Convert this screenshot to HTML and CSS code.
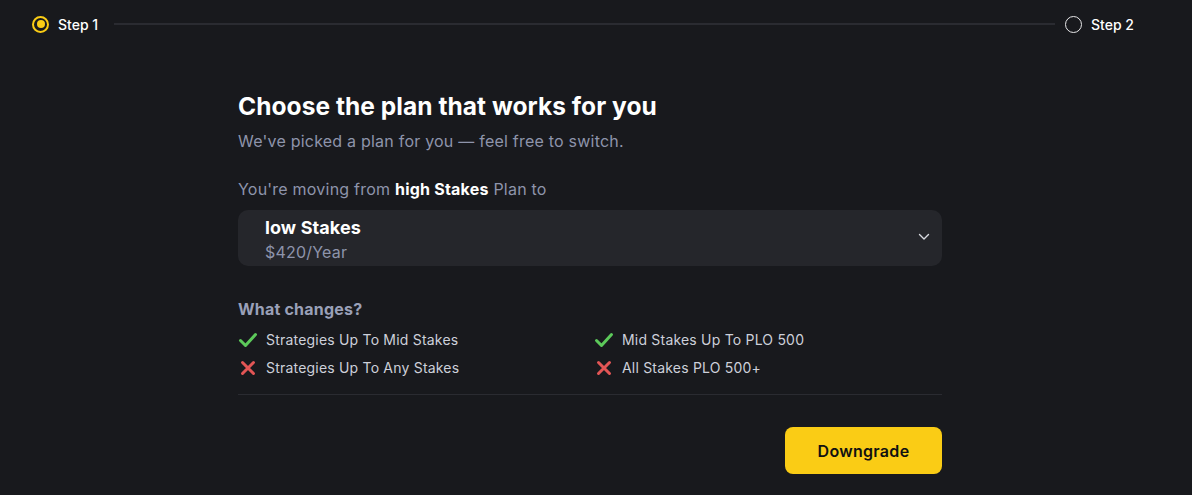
FILE: index.html
```html
<!DOCTYPE html>
<html>
<head>
<meta charset="utf-8">
<link rel="stylesheet" href="styles.css">
</head>
<body>
<div class="page">
  <div class="steps">
    <div class="step active"><span class="dot"></span><span class="label">Step 1</span></div>
    <div class="line"></div>
    <div class="step"><span class="dot"></span><span class="label">Step 2</span></div>
  </div>
  <main class="content">
    <h1 class="title">Choose the plan that works for you</h1>
    <p class="sub">We've picked a plan for you — feel free to switch.</p>
    <p class="moving">You're moving from <strong>high Stakes</strong> Plan to</p>
    <div class="select">
      <div class="sel-text">
        <div class="plan">low Stakes</div>
        <div class="price">$420/Year</div>
      </div>
      <svg class="chev" width="12" height="8" viewBox="0 0 12 8"><path d="M1.5 1.5 L6 6 L10.5 1.5" fill="none" stroke="#d8dae0" stroke-width="1.4" stroke-linecap="round" stroke-linejoin="round"/></svg>
    </div>
    <h2 class="changes">What changes?</h2>
    <div class="grid">
      <div class="item"><svg class="ic" viewBox="0 0 20 20"><path d="M2.5 10.5 L7.5 15.5 L17.5 4.5" fill="none" stroke="#5cc95a" stroke-width="3" stroke-linecap="round" stroke-linejoin="round"/></svg>Strategies Up To Mid Stakes</div>
      <div class="item"><svg class="ic" viewBox="0 0 20 20"><path d="M2.5 10.5 L7.5 15.5 L17.5 4.5" fill="none" stroke="#5cc95a" stroke-width="3" stroke-linecap="round" stroke-linejoin="round"/></svg>Mid Stakes Up To PLO 500</div>
      <div class="item"><svg class="ic" viewBox="0 0 20 20"><path d="M4.5 4.5 L15.5 15.5 M15.5 4.5 L4.5 15.5" fill="none" stroke="#e25555" stroke-width="3" stroke-linecap="round"/></svg>Strategies Up To Any Stakes</div>
      <div class="item"><svg class="ic" viewBox="0 0 20 20"><path d="M4.5 4.5 L15.5 15.5 M15.5 4.5 L4.5 15.5" fill="none" stroke="#e25555" stroke-width="3" stroke-linecap="round"/></svg>All Stakes PLO 500+</div>
    </div>
    <div class="divider"></div>
    <div class="actions"><button class="btn">Downgrade</button></div>
  </main>
</div>
</body>
</html>
```
FILE: styles.css
```css
* { box-sizing: border-box; }
html, body { margin: 0; padding: 0; background: #18191d; }
body { font-family: "Inter", "Open Sans", sans-serif; color: #fff; height: 495px; overflow: hidden; }
.page { padding: 14px 0 0 32px; }
.steps { display: flex; align-items: center; width: 1102px; height: 20px; }
.step { display: flex; align-items: center; gap: 9px; }
.dot { width: 17px; height: 17px; border-radius: 50%; border: 1.5px solid #e8e8ea; display: inline-block; position: relative; }
.step.active .dot { border: 2px solid #facc15; }
.step.active .dot::after { content: ""; position: absolute; left: 2.5px; top: 2.5px; width: 8px; height: 8px; border-radius: 50%; background: #facc15; }
.label { font-size: 14px; font-weight: 500; color: #fff; letter-spacing: 0; }
.line { flex: 1; height: 2px; background: #2a2b31; margin: 0 10px 0 16px; }
.content { width: 704px; margin-left: 206px; margin-top: 56px; }
.title { margin: 0; font-size: 24.5px; font-weight: 700; line-height: 32px; letter-spacing: 0.05px; }
.sub { margin: 8px 0 0; font-size: 16px; line-height: 22px; color: #8e94ab; letter-spacing: 0.22px; }
.moving { margin: 26px 0 0; font-size: 16px; line-height: 22px; color: #8e94ab; letter-spacing: 0.22px; }
.moving strong { color: #fff; font-weight: 700; }
.select { margin-top: 10px; height: 56px; background: #25262b; border-radius: 10px; display: flex; align-items: center; justify-content: space-between; padding: 0 12px 0 27px; }
.plan { font-size: 18px; font-weight: 700; line-height: 24px; color: #fff; margin-top: 2px; letter-spacing: 0.1px; }
.price { font-size: 16px; line-height: 22px; color: #8e94ab; margin-top: 1px; letter-spacing: 0.2px; }
.chev { margin-bottom: 2px; }
.changes { margin: 32px 0 0; font-size: 16px; font-weight: 700; line-height: 22px; color: #9aa0b8; letter-spacing: 0.2px; }
.grid { display: grid; grid-template-columns: 356px 1fr; row-gap: 8px; margin-top: 10px; }
.item { display: flex; align-items: center; gap: 8px; font-size: 14px; line-height: 20px; color: #cdd0da; letter-spacing: 0.2px; }
.ic { width: 20px; height: 20px; flex: none; }
.divider { height: 1px; background: #2a2b31; margin-top: 16px; }
.actions { display: flex; justify-content: flex-end; margin-top: 32px; }
.btn { width: 157px; height: 47px; border: none; border-radius: 8px; background: #facc15; color: #111; font-family: inherit; font-size: 16px; font-weight: 600; letter-spacing: 0.3px; }
```
